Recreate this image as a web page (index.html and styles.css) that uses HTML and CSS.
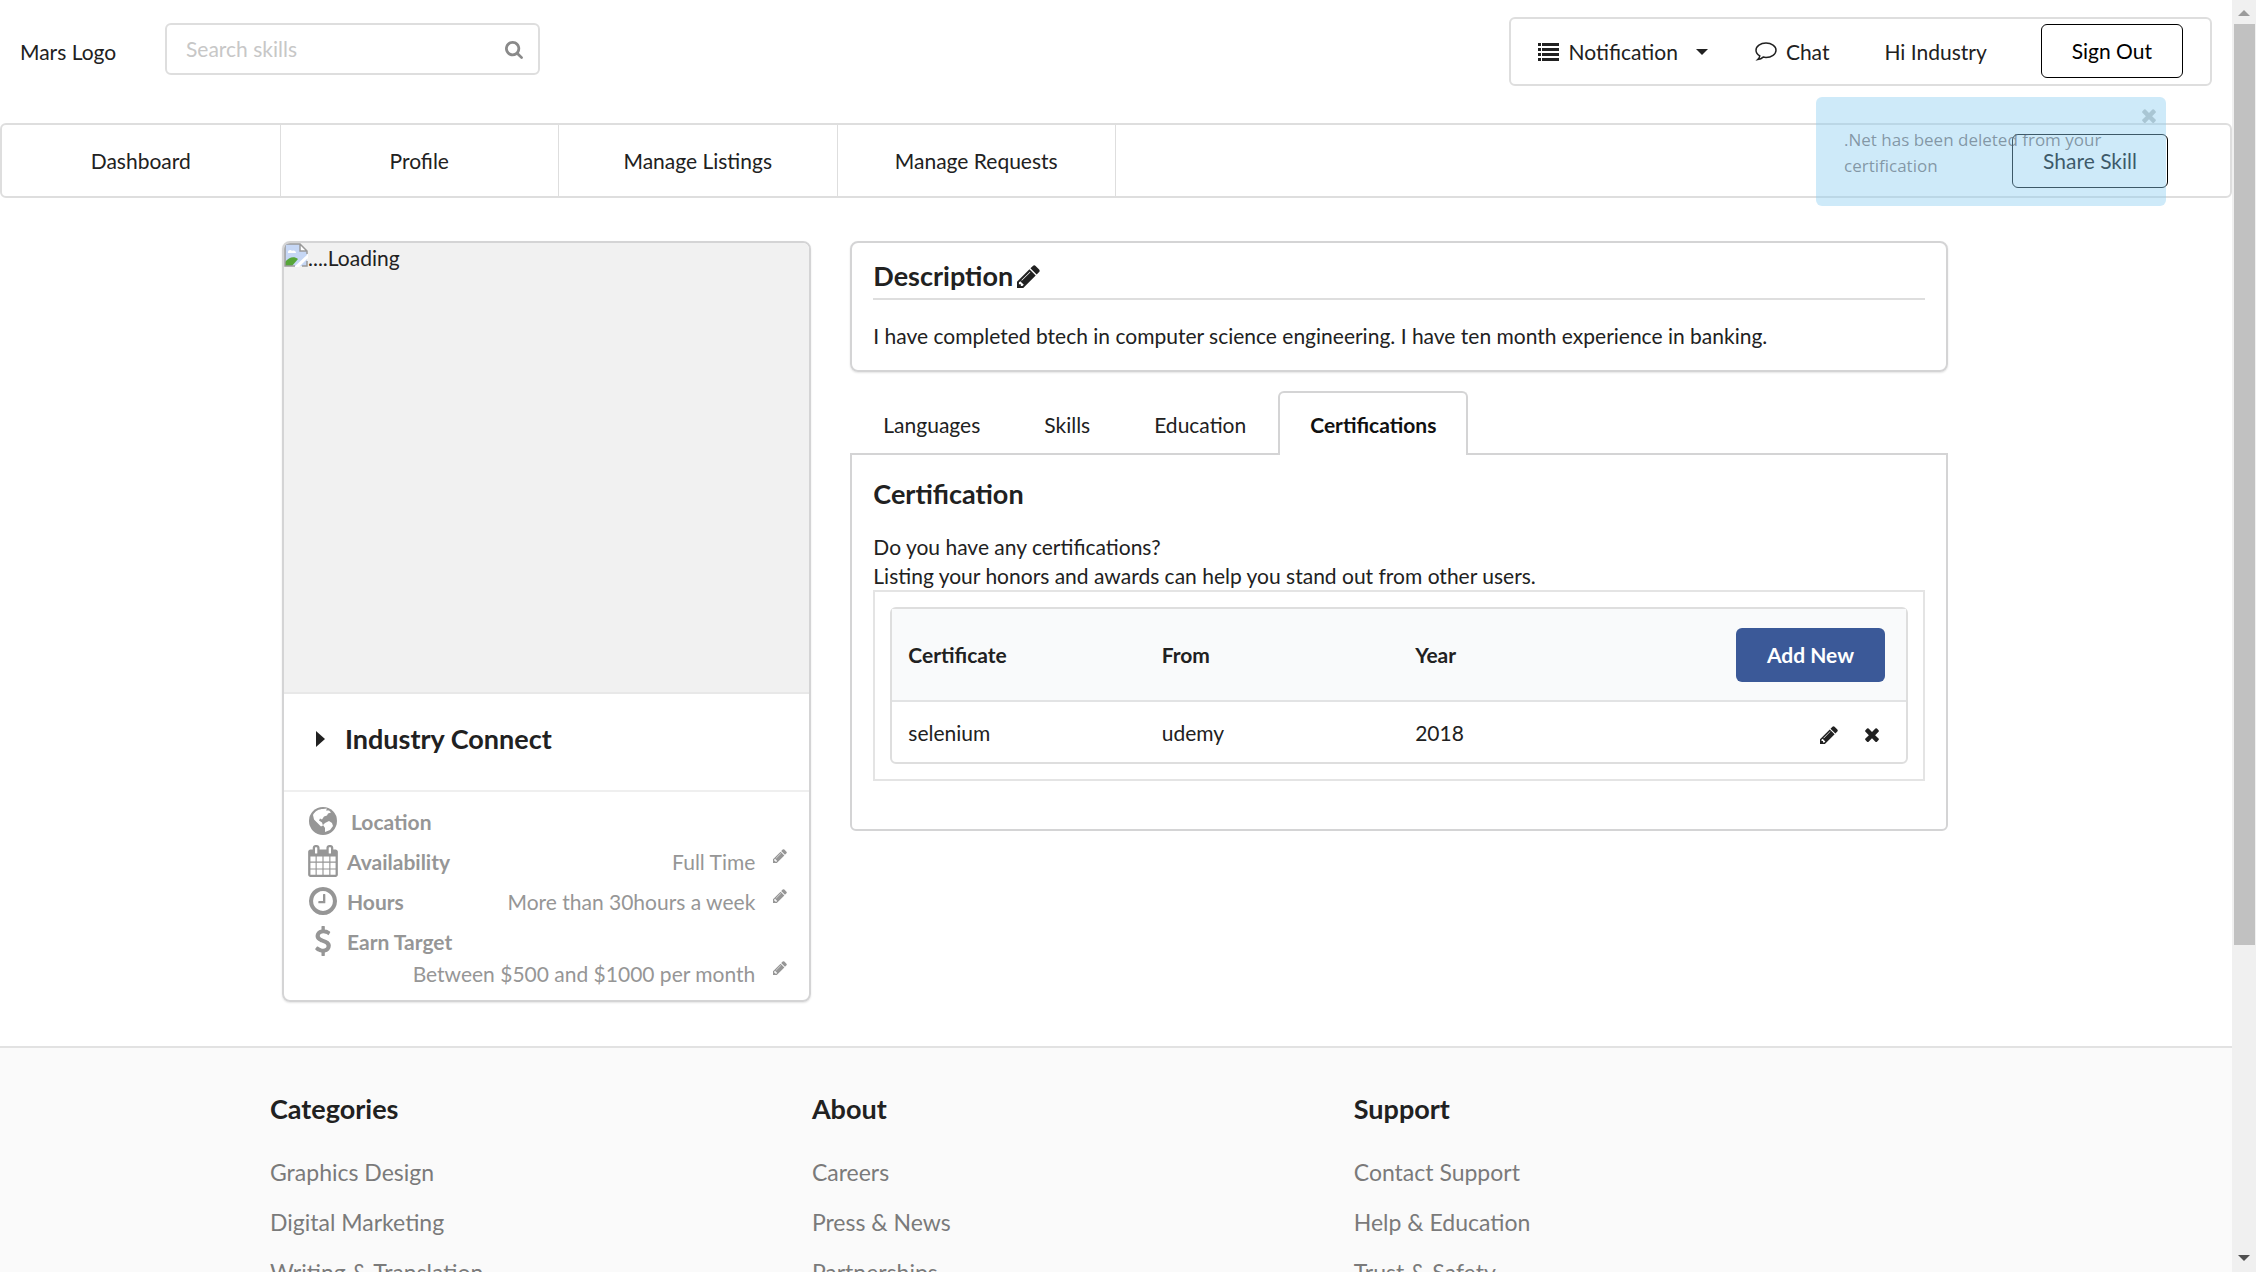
FILE: index.html
```html
<!DOCTYPE html>
<html lang="en">
<head>
<meta charset="utf-8">
<title>Profile</title>
<link rel="stylesheet" href="styles.css">
</head>
<body>
<svg class="sprite" aria-hidden="true">
  <symbol id="pencil" viewBox="128 128 1536 1536"><path d="M491 1536l91-91-235-235-91 91v107h128v128h107zm523-928q0-22-22-22-10 0-17 7l-542 542q-7 7-7 17 0 22 22 22 10 0 17-7l542-542q7-7 7-17zm-54-192l416 416-832 832h-416v-416zm683 96q0 53-37 90l-166 166-416-416 166-165q36-38 90-38 53 0 91 38l235 234q37 39 37 91z"/></symbol>
  <symbol id="times" viewBox="302 344 1188 1210"><path d="M1490 1322q0 40-28 68l-136 136q-28 28-68 28t-68-28l-294-294-294 294q-28 28-68 28t-68-28l-136-136q-28-28-28-68t28-68l294-294-294-294q-28-28-28-68t28-68l136-136q28-28 68-28t68 28l294 294 294-294q28-28 68-28t68 28l136 136q28 28 28 68t-28 68l-294 294 294 294q28 28 28 68z"/></symbol>
</svg>

<header class="topbar">
  <a class="logo" href="#">Mars Logo</a>
  <form class="search" role="search">
    <input type="text" placeholder="Search skills" aria-label="Search skills">
    <svg class="search-icon" viewBox="64 128 1664 1664"><path d="M1216 832q0-185-131.5-316.5t-316.5-131.5-316.5 131.5-131.5 316.5 131.5 316.5 316.5 131.5 316.5-131.5 131.5-316.5zm512 832q0 52-38 90t-90 38q-54 0-90-38l-343-342q-179 124-399 124-143 0-273.5-55.5t-225-150-150-225-55.5-273.5 55.5-273.5 150-225 225-150 273.5-55.5 273.5 55.5 225 150 150 225 55.5 273.5q0 220-124 399l343 343q37 37 37 90z"/></svg>
  </form>
  <div class="account">
    <button class="link-button" type="button">
      <svg class="icon-list" viewBox="0 0 21 18"><path d="M0 0h3v3H0zM4 0h17v3H4zM0 5h3v3H0zM4 5h17v3H4zM0 10h3v3H0zM4 10h17v3H4zM0 15h3v3H0zM4 15h17v3H4z"/></svg>
      Notification
      <svg class="icon-down" viewBox="0 0 12 6"><path d="M0 0h12L6 6z"/></svg>
    </button>
    <a class="chat" href="#">
      <svg class="icon-chat" viewBox="0 0 22 19"><path d="M11 1C5.500 1 1 4.200 1 8.200c0 2.300 1.500 4.300 3.800 5.600-.3 1.500-.9 2.700-2.100 3.800 2.400-.3 4.200-1.200 5.500-2.500.9.200 1.800.300 2.800.300 5.500 0 10-3.200 10-7.200S16.500 1 11 1z"/></svg>
      Chat
    </a>
    <span class="greeting">Hi Industry</span>
    <button class="outline-button" type="button">Sign Out</button>
  </div>
</header>

<nav class="mainnav">
  <a href="#">Dashboard</a>
  <a href="#">Profile</a>
  <a href="#">Manage Listings</a>
  <a href="#">Manage Requests</a>
  <button class="outline-button share" type="button">Share Skill</button>
</nav>

<div class="toast" role="status">
  <p>.Net has been deleted from your certification</p>
  <button class="toast-close" type="button" aria-label="Close"><svg><use href="#times"/></svg></button>
</div>

<main class="container profile">
  <aside class="card person">
    <div class="photo">
      <svg class="broken" viewBox="0 0 24 24"><path fill="#c6d7f5" d="M1 1h15l7 7v15H1z"/><path fill="#fff" d="M4 9c0-2 3-3 4-1 2-1 4 0 4 2H4zM16 1v7h7z"/><path fill="#57a639" d="M1 23v-4c4-5 9-6 13-3l-6 7z"/><path fill="#fff" d="M10 24 24 11v4l-9 9z"/><path fill="none" stroke="#9a9a9a" stroke-width="1.500" d="M11 23H1V1h15l7 7v3M16 1v7h7M18 23h5v-5"/></svg><span>....Loading</span>
    </div>
    <h2 class="name"><svg viewBox="0 0 9 16"><path d="M0 0l9 8-9 8z"/></svg>Industry Connect</h2>
    <ul class="facts">
      <li>
        <svg class="fact-icon" viewBox="0 0 30 30"><circle cx="15" cy="15" r="14"/><path class="land" d="M5 9c2-4 6-6 10-6l4-.5-1 2 3 0 2 2-3 1-1 2-3 1-2 3-2-1-1 2 3 2 1 3-2 1-4-4-3-3zM17 17l4-2 3 2 1 3-3 4-5 2 0-4-2-3z"/></svg>
        <strong class="indent">Location</strong>
      </li>
      <li>
        <svg class="fact-icon" viewBox="64 0 1664 1792"><path d="M192 1664h288v-288h-288v288zm352 0h320v-288h-320v288zm-352-352h288v-320h-288v320zm352 0h320v-320h-320v320zm-352-384h288v-288h-288v288zm736 736h320v-288h-320v288zm-384-736h320v-288h-320v288zm768 736h288v-288h-288v288zm-384-352h320v-320h-320v320zm-352-864v-288q0-13-9.500-22.500t-22.500-9.500h-64q-13 0-22.500 9.500t-9.500 22.500v288q0 13 9.500 22.500t22.500 9.500h64q13 0 22.500-9.500t9.500-22.500zm736 864h288v-320h-288v320zm-384-384h320v-288h-320v288zm384 0h288v-288h-288v288zm32-480v-288q0-13-9.500-22.500t-22.500-9.500h-64q-13 0-22.500 9.500t-9.500 22.500v288q0 13 9.500 22.500t22.500 9.500h64q13 0 22.500-9.500t9.500-22.500zm384-64v1280q0 52-38 90t-90 38h-1408q-52 0-90-38t-38-90v-1280q0-52 38-90t90-38h128v-96q0-66 47-113t113-47h64q66 0 113 47t47 113v96h384v-96q0-66 47-113t113-47h64q66 0 113 47t47 113v96h128q52 0 90 38t38 90z"/></svg>
        <strong>Availability</strong><span class="value">Full Time</span>
        <button class="edit" type="button" aria-label="Edit availability"><svg><use href="#pencil"/></svg></button>
      </li>
      <li>
        <svg class="fact-icon" viewBox="74 74 1644 1644"><path d="M1024 544v448q0 14-9 23t-23 9h-320q-14 0-23-9t-9-23v-64q0-14 9-23t23-9h224v-352q0-14 9-23t23-9h64q14 0 23 9t9 23zm416 352q0-148-73-273t-198-198-273-73-273 73-198 198-73 273 73 273 198 198 273 73 273-73 198-198 73-273zm224 0q0 209-103 385.500t-279.500 279.500-385.500 103-385.500-103-279.500-279.500-103-385.500 103-385.500 279.500-279.500 385.500-103 385.500 103 279.500 279.500 103 385.500z"/></svg>
        <strong>Hours</strong><span class="value">More than 30hours a week</span>
        <button class="edit" type="button" aria-label="Edit hours"><svg><use href="#pencil"/></svg></button>
      </li>
      <li>
        <svg class="fact-icon" viewBox="0 0 1792 1792"><path d="M1362 1185q0 153-99.500 263.500t-258.500 136.500v175q0 14-9 23t-23 9h-135q-13 0-22.500-9.500t-9.500-22.500v-175q-66-9-127.500-31t-101.500-44.500-74-48-46.500-37.500-17.500-18q-17-21-2-41l103-135q7-10 23-12 15-2 24 9l2 2q113 99 243 125 37 8 74 8 81 0 142.500-43t61.500-122q0-28-15-53t-33.500-42-58.500-37.500-66-32-80-32.500q-39-16-61.500-25t-61.500-26.500-62.500-31-56.500-35.500-53.500-42.500-43.500-49-35.500-58-21-66.500-8.500-78q0-138 98-242t255-134v-180q0-13 9.500-22.500t22.500-9.500h135q14 0 23 9t9 23v176q57 6 110.500 23t87 33.500 63.500 37.500 39 29 15 14q17 18 5 38l-81 146q-8 15-23 16-14 3-27-7-3-3-14.500-12t-39-26.500-58.500-32-74.500-26-85.500-11.500q-95 0-155 43t-60 111q0 26 8.500 48t29.500 41.500 39.500 33 56 31 60.500 27 70 27.500q53 20 81 31.500t76 35 75.500 42.500 62 50 53 63.500 31.500 76.500 13 94z"/></svg>
        <strong>Earn Target</strong>
      </li>
      <li class="continued">
        <span class="value">Between $500 and $1000 per month</span>
        <button class="edit" type="button" aria-label="Edit earn target"><svg><use href="#pencil"/></svg></button>
      </li>
    </ul>
  </aside>

  <div class="details">
    <section class="card description">
      <h3>Description<button class="edit-large" type="button" aria-label="Edit description"><svg><use href="#pencil"/></svg></button></h3>
      <p>I have completed btech in computer science engineering. I have ten month experience in banking.</p>
    </section>

    <div class="tabs" role="tablist">
      <button type="button" role="tab">Languages</button>
      <button type="button" role="tab">Skills</button>
      <button type="button" role="tab">Education</button>
      <button type="button" role="tab" class="active" aria-selected="true">Certifications</button>
    </div>
    <section class="panel">
      <h3>Certification</h3>
      <p>Do you have any certifications?<br>Listing your honors and awards can help you stand out from other users.</p>
      <div class="frame">
        <table>
          <thead>
            <tr><th>Certificate</th><th>From</th><th>Year</th><th class="actions"><button class="add" type="button">Add New</button></th></tr>
          </thead>
          <tbody>
            <tr><td>selenium</td><td>udemy</td><td>2018</td><td class="actions"><button class="row-button" type="button" aria-label="Edit"><svg class="row-edit"><use href="#pencil"/></svg></button><button class="row-button" type="button" aria-label="Delete"><svg class="row-delete"><use href="#times"/></svg></button></td></tr>
          </tbody>
        </table>
      </div>
    </section>
  </div>
</main>

<footer class="footer">
  <div class="container">
    <div class="footer-grid">
      <section><h3>Categories</h3><a href="#">Graphics Design</a><a href="#">Digital Marketing</a><a href="#">Writing &amp; Translation</a></section>
      <section><h3>About</h3><a href="#">Careers</a><a href="#">Press &amp; News</a><a href="#">Partnerships</a></section>
      <section><h3>Support</h3><a href="#">Contact Support</a><a href="#">Help &amp; Education</a><a href="#">Trust &amp; Safety</a></section>
    </div>
  </div>
</footer>

<div class="scrollbar" aria-hidden="true">
  <svg class="arrow up" viewBox="0 0 12 6"><path d="M0 6h12L6 0z"/></svg>
  <div class="thumb"></div>
  <svg class="arrow down" viewBox="0 0 12 6"><path d="M0 0h12L6 6z"/></svg>
</div>
</body>
</html>
```
FILE: styles.css
```css
* { box-sizing: border-box; }

html { scrollbar-width: none; }

body {
  margin: 0;
  padding-right: 24px;
  background: #fff;
  color: #212121;
  font: 21px/29px Lato, "Liberation Sans", sans-serif;
}

h2, h3, p, ul { margin: 0; padding: 0; }
a { color: inherit; text-decoration: none; }
button, input { font: inherit; color: inherit; }
button { margin: 0; padding: 0; border: 0; background: none; cursor: pointer; }
svg { display: block; flex: none; fill: currentColor; }
.sprite { position: absolute; width: 0; height: 0; }

/* Top bar */
.topbar {
  display: flex;
  align-items: flex-start;
  height: 123px;
  padding: 17px 20px 0;
}
.logo { width: 145px; padding-top: 20px; }
.search { position: relative; width: 375px; margin-top: 6px; }
.search input {
  display: block;
  width: 100%;
  height: 52px;
  padding: 0 56px 2px 19px;
  border: 2px solid #dedede;
  border-radius: 6px;
  background: #fff;
  outline: 0;
}
.search input::placeholder { color: #c7c7c7; opacity: 1; }
.search-icon {
  position: absolute;
  top: 18px;
  right: 17px;
  width: 18px;
  height: 18px;
  color: #8a8a8a;
}
.account {
  display: flex;
  align-items: center;
  height: 69px;
  margin-left: auto;
  padding: 0 27px;
  border: 2px solid #dedede;
  border-radius: 6px;
}
.link-button, .chat { display: flex; align-items: center; }
.icon-list { width: 21px; height: 18px; margin-right: 10px; }
.icon-down { width: 12px; height: 6px; margin-left: 18px; }
.chat { margin: 0 55px 0 47px; }
.icon-chat {
  width: 22px;
  height: 19px;
  margin-right: 9px;
  fill: none;
  stroke: currentColor;
  stroke-width: 1.5;
}
.greeting { margin-right: 54px; }
.outline-button {
  height: 54px;
  padding: 0 30px;
  border: 1px solid #000;
  border-radius: 6px;
  color: #000;
}
.account .outline-button { margin-bottom: 2px; }

/* Main navigation */
.mainnav {
  display: flex;
  align-items: center;
  height: 75px;
  border: 2px solid #dedede;
  border-radius: 6px;
}
.mainnav a {
  width: 12.5%;
  line-height: 71px;
  border-right: 1px solid #dedede;
  text-align: center;
}
.share { margin: 0 62px 0 auto; }

/* Toast over the header */
.toast {
  position: absolute;
  top: 97px;
  right: 90px;
  width: 350px;
  height: 109px;
  padding: 30px 40px 0 28px;
  border-radius: 6px;
  background: rgba(142, 207, 240, .43);
  color: rgba(80, 95, 110, .6);
  font: 17px/26px "Open Sans", "Noto Sans", sans-serif;
}
.toast-close { position: absolute; top: 12px; right: 10px; }
.toast-close svg { width: 14px; height: 14px; color: #a9c6d4; }

/* Profile */
.container { max-width: 1692px; margin: 0 auto; }
.profile {
  display: grid;
  grid-template-columns: 529fr 1097fr;
  gap: 39px;
  align-items: start;
  padding: 43px 14px 44px 12px;
}
.card {
  border: 2px solid #d4d4d5;
  border-radius: 8px;
  box-shadow: 0 1px 2px #e4e4e4;
}
.person { overflow: hidden; }
.photo {
  display: flex;
  height: 451px;
  border-bottom: 2px solid #e8e8e8;
  background: #f1f1f1;
}
.broken { width: 24px; height: 24px; }
.name {
  display: flex;
  align-items: center;
  height: 98px;
  padding: 0 0 6px 32px;
  border-bottom: 2px solid #efefef;
  font-size: 27px;
  line-height: 36px;
}
.name svg { width: 9px; height: 16px; margin-right: 20px; }
.facts {
  padding: 9px 22px 15px 24px;
  color: #969696;
  list-style: none;
}
.facts li { display: flex; align-items: center; height: 40px; }
.facts .continued { height: 24px; }
.fact-icon { width: 30px; height: 32px; margin-right: 9px; }
.land { fill: #fff; }
.indent { margin-left: 4px; }
.value { margin-left: auto; }
.edit { margin-left: 18px; padding-bottom: 10px; }
.edit svg { width: 14px; height: 14px; }

h3 { font-size: 27px; line-height: 36px; }
.description { height: 131px; padding: 15px 21px 0; }
.description h3 {
  display: flex;
  padding-bottom: 4px;
  border-bottom: 2px solid #dedede;
}
.description p { padding-top: 21px; }
.edit-large { margin-left: 4px; }
.edit-large svg { width: 23px; height: 23px; }

.tabs { display: flex; margin-top: 19px; padding-left: 1px; }
.tabs button {
  height: 64px;
  margin-bottom: -2px;
  padding: 0 30px;
  border: 2px solid transparent;
  border-bottom: 0;
}
.tabs .active {
  position: relative;
  border-color: #d4d4d5;
  border-radius: 6px 6px 0 0;
  background: #fff;
  color: #111;
  font-weight: bold;
}
.panel {
  padding: 21px 21px 48px;
  border: 2px solid #d4d4d5;
  border-radius: 0 0 6px 6px;
}
.panel p { padding-top: 20px; }
.frame { padding: 15px; border: 2px solid #e4e4e4; }
table {
  width: 100%;
  table-layout: fixed;
  border: 2px solid #dedede;
  border-radius: 6px;
  border-spacing: 0;
  text-align: left;
}
th, td { padding: 0 16px; }
th { height: 93px; border-bottom: 2px solid #e2e3e4; background: #f9fafb; }
td { height: 60px; }
.actions { text-align: right; }
th.actions { padding-right: 21px; }
td.actions { padding-right: 27px; }
.add {
  height: 54px;
  padding: 0 31px;
  border-radius: 6px;
  background: #3b5998;
  color: #fff;
  font-weight: bold;
}
.row-button { margin-left: 27px; vertical-align: middle; }
.row-edit { width: 18px; height: 18px; }
.row-delete { width: 14px; height: 14px; }

/* Footer */
.footer { padding-top: 43px; border-top: 2px solid #e2e2e2; background: #fafafa; }
.footer-grid { display: grid; grid-template-columns: 5fr 5fr 5fr 1fr; margin-right: -42px; }
.footer h3 { margin-bottom: 20px; }
.footer a { display: block; color: #7a7a7a; font-size: 23px; line-height: 50px; }

/* Scroll bar */
.scrollbar {
  position: fixed;
  inset: 0 0 0 auto;
  display: flex;
  flex-direction: column;
  align-items: center;
  width: 24px;
  padding: 10px 0 11px;
  background: #f0f0f0;
}
.arrow { width: 12px; height: 6px; }
.up { margin-bottom: 8px; color: #9b9b9b; }
.thumb { width: 21px; height: 73.6%; background: #c1c1c1; }
.down { margin-top: auto; color: #505050; }
```
